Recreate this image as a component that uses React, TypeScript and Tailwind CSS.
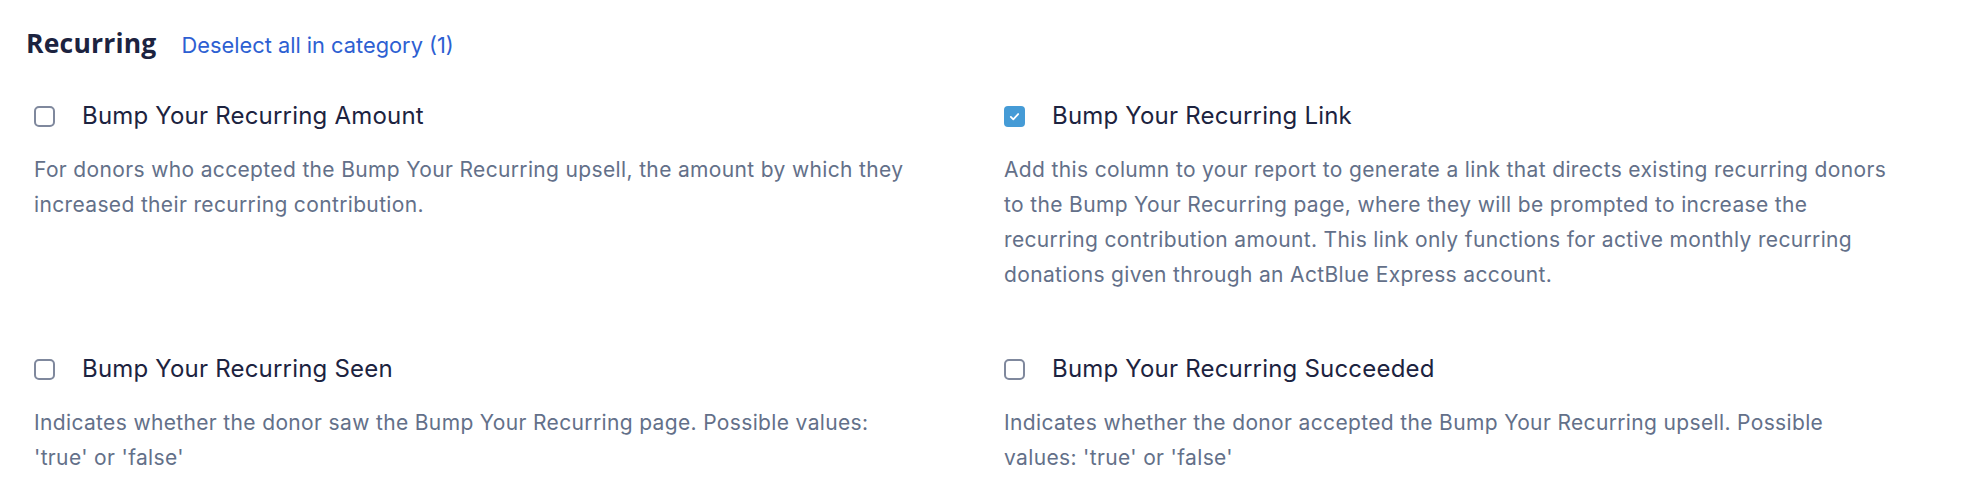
import React from 'react';

interface Field {
  title: string;
  description: string;
  checked: boolean;
}

const fields: Field[] = [
  {
    title: 'Bump Your Recurring Amount',
    description:
      'For donors who accepted the Bump Your Recurring upsell, the amount by which they increased their recurring contribution.',
    checked: false,
  },
  {
    title: 'Bump Your Recurring Link',
    description:
      'Add this column to your report to generate a link that directs existing recurring donors to the Bump Your Recurring page, where they will be prompted to increase the recurring contribution amount. This link only functions for active monthly recurring donations given through an ActBlue Express account.',
    checked: true,
  },
  {
    title: 'Bump Your Recurring Seen',
    description:
      "Indicates whether the donor saw the Bump Your Recurring page. Possible values: 'true' or 'false'",
    checked: false,
  },
  {
    title: 'Bump Your Recurring Succeeded',
    description:
      "Indicates whether the donor accepted the Bump Your Recurring upsell. Possible values: 'true' or 'false'",
    checked: false,
  },
];

const Checkbox: React.FC<{ checked: boolean }> = ({ checked }) =>
  checked ? (
    <span className="flex h-[21px] w-[21px] shrink-0 items-center justify-center rounded-[4px] bg-[#459bd6]">
      <svg viewBox="0 0 16 16" className="h-[13px] w-[13px]" fill="none">
        <path d="M3.5 8.5l3 3 6-6.5" stroke="white" strokeWidth="2.2" strokeLinecap="round" strokeLinejoin="round" />
      </svg>
    </span>
  ) : (
    <span className="h-[21px] w-[21px] shrink-0 rounded-[5px] border-[2.5px] border-[#7f889d] bg-white" />
  );

const App: React.FC = () => {
  return (
    <div className="min-h-[502px] w-full bg-white pl-[26px] pt-[27px] font-['Inter',sans-serif]">
      {/* Category header */}
      <div className="flex items-baseline gap-[25px]">
        <h2 className="font-['Open_Sans',sans-serif] text-[26.5px] leading-[32px] font-bold tracking-[0.2px] text-[#1c2340]">
          Recurring
        </h2>
        <button className="text-[21.8px] leading-[32px] text-[#2d5fd2]">Deselect all in category (1)</button>
      </div>

      {/* Fields */}
      <div className="mt-[39px] grid grid-cols-[970px_1fr] gap-y-[61px] pl-[8px]">
        {fields.map((f) => (
          <div key={f.title} className="max-w-[888px]">
            <label className="flex items-center gap-[27px]">
              <Checkbox checked={f.checked} />
              <span className="text-[24px] leading-[32px] tracking-[0.2px] text-[#1c2340]">{f.title}</span>
            </label>
            <p className="mt-[20px] text-[21px] leading-[35px] tracking-[0.35px] text-[#637089]">
              {f.description}
            </p>
          </div>
        ))}
      </div>
    </div>
  );
};

export default App;
